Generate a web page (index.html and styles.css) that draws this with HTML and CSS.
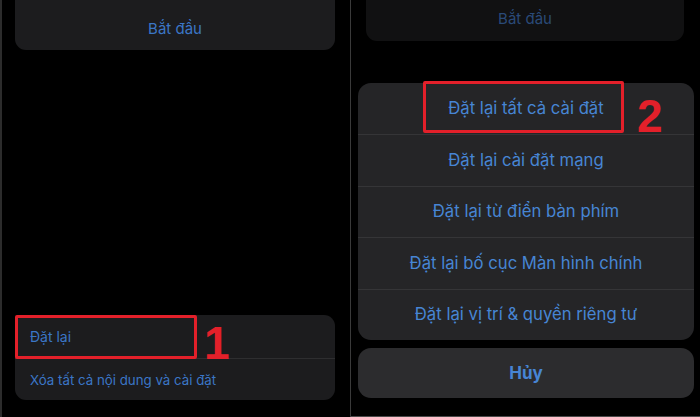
FILE: index.html
```html
<!DOCTYPE html>
<html lang="vi">
<head>
<meta charset="utf-8">
<title>Đặt lại</title>
<link rel="stylesheet" href="styles.css">
</head>
<body>
<div class="screens">
  <section class="panel panel-left">
    <div class="top-card"><span class="link">Bắt đầu</span></div>
    <div class="spacer"></div>
    <div class="group">
      <div class="group-row"><span class="link">Đặt lại</span></div>
      <div class="group-row"><span class="link">Xóa tất cả nội dung và cài đặt</span></div>
    </div>
    <div class="mark mark-1"></div>
    <div class="num num-1">1</div>
  </section>
  <section class="panel panel-right">
    <div class="top-card top-card-dim"><span class="link">Bắt đầu</span></div>
    <div class="sheet">
      <div class="sheet-row">Đặt lại tất cả cài đặt</div>
      <div class="sheet-row">Đặt lại cài đặt mạng</div>
      <div class="sheet-row">Đặt lại từ điển bàn phím</div>
      <div class="sheet-row">Đặt lại bố cục Màn hình chính</div>
      <div class="sheet-row">Đặt lại vị trí &amp; quyền riêng tư</div>
    </div>
    <div class="cancel">Hủy</div>
    <div class="mark mark-2"></div>
    <div class="num num-2">2</div>
  </section>
</div>
</body>
</html>
```
FILE: styles.css
```css
* { box-sizing: border-box; }
html, body {
  margin: 0;
  padding: 0;
  background: #000;
}
body {
  font-family: "Inter", "Noto Sans", sans-serif;
  width: 700px;
  height: 417px;
  overflow: hidden;
}
.screens {
  display: flex;
  width: 700px;
  height: 417px;
}
.panel {
  position: relative;
  display: flex;
  flex-direction: column;
  height: 417px;
  background: #000;
}
.panel-left {
  width: 351px;
  border-left: 2px solid #2c2c2c;
  border-right: 1px solid #3a3a3a;
}
.panel-right {
  width: 349px;
  border-bottom: 1px solid #4a4a4a;
}
.link {
  color: #3b76c6;
}
.top-card {
  height: 50px;
  margin: 0 15px 0 13px;
  background: #1c1c1e;
  border-radius: 0 0 11px 11px;
  display: flex;
  align-items: center;
  justify-content: center;
  padding-top: 6px;
  font-size: 15px;
}
.top-card-dim {
  height: 41px;
  margin: 0 16px 0 15px;
  background: #111112;
  padding-top: 0;
  padding-bottom: 4px;
}
.top-card-dim .link {
  color: #2a4a78;
}
.spacer { flex: 1; }
.group {
  margin: 0 15px 17px 13px;
  background: #1c1c1e;
  border-radius: 11px;
  font-size: 13.3px;
}
.group-row {
  height: 43px;
  display: flex;
  align-items: center;
  padding-left: 15px;
}
.group-row:first-child {
  font-size: 14px;
}
.group-row + .group-row {
  border-top: 1px solid #2e2e30;
  height: 42px;
}
.sheet {
  margin: 42px 6px 0 7px;
  background: #252527;
  border-radius: 13px;
  overflow: hidden;
}
.sheet-row {
  height: 51.4px;
  display: flex;
  align-items: center;
  justify-content: center;
  color: #4785d4;
  font-size: 16.7px;
  padding-bottom: 1px;
}
.sheet-row + .sheet-row {
  border-top: 1px solid #353537;
}
.cancel {
  margin: 8px 6px 0 7px;
  height: 50px;
  background: #2c2c2e;
  border-radius: 13px;
  display: flex;
  align-items: center;
  justify-content: center;
  color: #4785d4;
  font-size: 17px;
  font-weight: 700;
}
.mark {
  position: absolute;
  border: 3px solid #e3202a;
  border-radius: 2px;
}
.mark-1 {
  left: 13px;
  top: 315px;
  width: 182px;
  height: 44px;
}
.mark-2 {
  left: 72px;
  top: 81px;
  width: 201px;
  height: 52px;
}
.num {
  position: absolute;
  color: #e3202a;
  font-family: "Liberation Sans", sans-serif;
  font-weight: 700;
  font-size: 46px;
  line-height: 1;
}
.num-1 {
  left: 202px;
  top: 320px;
}
.num-2 {
  left: 286px;
  top: 93px;
}
```
